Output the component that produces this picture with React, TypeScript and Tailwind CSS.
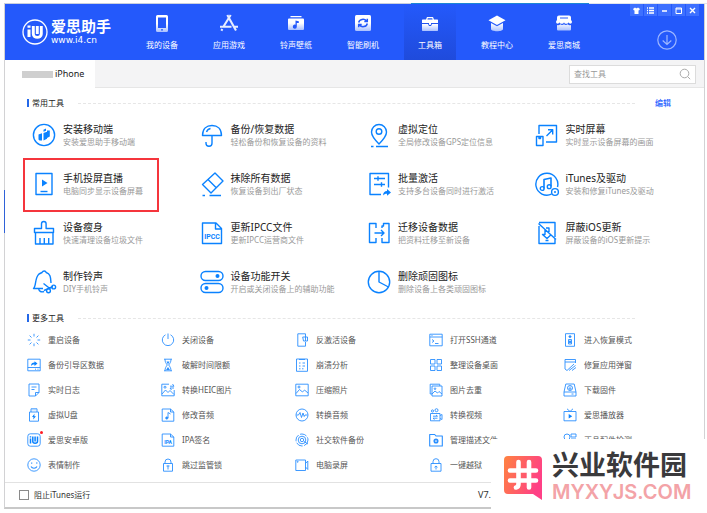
import type { ReactNode } from "react";

type Tool = { title: string; desc: string; icon: ReactNode; highlight?: boolean };
type SmallTool = { title: string; icon: ReactNode; dot?: boolean };

function Big({ children }: { children: ReactNode }) {
  return (
    <svg viewBox="0 0 26 26" className="h-[26px] w-[26px] shrink-0" fill="none" stroke="#0a82ff" strokeWidth="1.4" strokeLinejoin="round" aria-hidden="true">
      {children}
    </svg>
  );
}

function Small({ children }: { children: ReactNode }) {
  return (
    <svg viewBox="0 0 14 14" className="h-3.5 w-3.5 shrink-0" fill="none" stroke="#2a8fff" strokeWidth="0.9" strokeLinejoin="round" aria-hidden="true">
      {children}
    </svg>
  );
}

const navItems: { label: string; icon: ReactNode; active?: boolean }[] = [
  {
    label: "我的设备",
    icon: (
      <path fillRule="evenodd" d="M5.500 1h9A1.500 1.500 0 0 1 16 2.500v14a1.500 1.500 0 0 1-1.500 1.500h-9A1.500 1.500 0 0 1 4 16.500v-14A1.500 1.500 0 0 1 5.500 1zM6 3.500v10.500h8V3.500zM9 15.200v1.300h2v-1.300z" />
    ),
  },
  {
    label: "应用游戏",
    icon: (
      <g fill="none" stroke="#e6edff" strokeWidth="2.100">
        <path d="M8.300 1l8.700 15.500M11.700 1l-7.500 12M1 12.800h11.500M15.200 12.800H19M3.300 15l-.9 1.800" />
      </g>
    ),
  },
  {
    label: "铃声壁纸",
    icon: (
      <path fillRule="evenodd" d="M4.500 2h11v1.300h-11zM3 4.500h14a1 1 0 0 1 1 1V15a1 1 0 0 1-1 1H3a1 1 0 0 1-1-1V5.500a1 1 0 0 1 1-1zM9.500 6.500v4.300a2 2 0 1 0 1.300 1.900V9h2V7.200z" />
    ),
  },
  {
    label: "智能刷机",
    icon: (
      <>
        <rect x="2" y="1" width="16" height="16" rx="1.500" />
        <g fill="none" stroke="#2459fb" strokeWidth="1.500">
          <path d="M5.700 8.500a4.300 3.800 0 0 1 7.800-1.500M14.300 9.500a4.300 3.800 0 0 1-7.800 1.500M14.300 4.800v2.700h-3M5.700 13.200v-2.700h3" />
        </g>
      </>
    ),
  },
  {
    label: "工具箱",
    active: true,
    icon: (
      <>
        <path fillRule="evenodd" d="M7 3h6l1 2.500h3.500l.5.500v3H2V6l.5-.5H6zM7.800 4.200L7.400 5.500h5.200l-.4-1.300zM2 10h6l1 2h2l1-2h6v6.500l-.5.500h-15l-.5-.5z" />
        <path d="M9 9h2v2H9z" />
      </>
    ),
  },
  {
    label: "教程中心",
    icon: <path d="M10 1.500l8.500 4.700L10 11 1.500 6.200zM4 9l6 3.300L16 9v6c0 3-12 3-12 0z" />,
  },
  {
    label: "爱思商城",
    icon: (
      <path fillRule="evenodd" d="M5 1.500h10a2 2 0 0 1 2 2v2.300l1 2c0 2.500-3 2.500-3.500.5-.5 2-4 2-4.500 0-.5 2-4 2-4.500 0C5 10.300 2 10.300 2 7.800l1-2V3.500a2 2 0 0 1 2-2zM6 3.500v1h8v-1zM3 11c1.500.5 2.500 0 3.200-.7 1 1 2.800 1 3.800 0 1 1 2.800 1 3.800 0 .7.700 1.700 1.200 3.200.7v4.500a1 1 0 0 1-1 1H4a1 1 0 0 1-1-1z" />
    ),
  },
];

const tools: Tool[] = [
  {
    title: "安装移动端",
    desc: "安装爱思助手移动端",
    icon: (
      <Big>
        <circle cx="13" cy="13" r="10.600" />
        <path d="M7.500 12.500l3.500-1.200v7.200H8.500l-1-1zM12.500 11l3.500-1.200v7l-3.500 1.700zM16 8.500h2.800v6L16 16zM12.500 7.800L15 6.500v2.300l-2.500 1z" fill="#0a82ff" stroke="none" />
      </Big>
    ),
  },
  {
    title: "备份/恢复数据",
    desc: "轻松备份和恢复设备的资料",
    icon: (
      <Big>
        <path d="M3.500 13.500C3.500 7 7.500 3.500 13 3.500s9.500 3.500 9.500 10zM13 13.500v7.800a3 3 0 0 1-6 0V20M7.500 10c.7-2 2-3.200 4-3.500" />
      </Big>
    ),
  },
  {
    title: "虚拟定位",
    desc: "全局修改设备GPS定位信息",
    icon: (
      <Big>
        <path d="M13 22c-4-4-7.500-7.500-7.500-12a7.500 7.500 0 0 1 15 0c0 4.500-3.500 8-7.500 12z" />
        <circle cx="13" cy="9.500" r="2.800" />
        <path d="M5 24.500h2.500M10 24.500h12" />
      </Big>
    ),
  },
  {
    title: "实时屏幕",
    desc: "实时显示设备屏幕的画面",
    icon: (
      <Big>
        <path d="M5 12V3.500h17.500v16.500H12M2.500 14.500H9v9H2.500zM5 14.500v2h1.500v-2M12.500 14l6-6M14 7.800h4.700v4.700" />
      </Big>
    ),
  },
  {
    title: "手机投屏直播",
    desc: "电脑同步显示设备屏幕",
    highlight: true,
    icon: (
      <Big>
        <rect x="5" y="2.500" width="16" height="21" />
        <path d="M9.500 20.500h7" />
        <path d="M11 8.500v7l5.500-3.500z" fill="#0a82ff" stroke="none" />
      </Big>
    ),
  },
  {
    title: "抹除所有数据",
    desc: "恢复设备到出厂状态",
    icon: (
      <Big>
        <path d="M16 2l8 8-12 12-8.500-8.500zM9 8.500l8.500 8.500M3.500 24.500H6M10.500 24.500H22" />
      </Big>
    ),
  },
  {
    title: "批量激活",
    desc: "支持多台设备同时进行激活",
    icon: (
      <Big>
        <path d="M15 23.500H4v-21h18.500v14M8 7.500h11M12 5.200v4.600M8 13.500h11M15.500 11.200v4.600" />
        <path d="M17 24.500c.2-3 1.500-4.300 4-4.500v-2l4 3.500-4 3.300v-2c-2 0-3 .5-4 1.700z" fill="#0a82ff" stroke="none" />
      </Big>
    ),
  },
  {
    title: "iTunes及驱动",
    desc: "安装和修复iTunes及驱动",
    icon: (
      <Big>
        <path d="M17.500 23.200A11 11 0 1 1 23.500 16" />
        <path d="M10 17.500V8.500l7-1.500v8.500" strokeWidth="1.600" />
        <circle cx="8.200" cy="17.500" r="1.900" />
        <circle cx="15.200" cy="15.700" r="1.900" />
        <circle cx="21" cy="21" r="3.400" />
        <circle cx="21" cy="21" r="1" fill="#0a82ff" stroke="none" />
      </Big>
    ),
  },
  {
    title: "设备瘦身",
    desc: "快速清理设备垃圾文件",
    icon: (
      <Big>
        <path d="M3.500 12.500V8.500h7V3.800a2.300 2.300 0 0 1 4.600 0v4.700h7.400v4zM4.500 12.500V24h17.500V12.500M9 24v-6M13.300 24v-6M17.700 24v-6" />
      </Big>
    ),
  },
  {
    title: "更新IPCC文件",
    desc: "更新IPCC运营商文件",
    icon: (
      <Big>
        <path d="M3.500 3h13.500l5.500 5.500v15h-19zM16.500 3v6h6" />
        <text x="13" y="19" textAnchor="middle" fill="#0a82ff" stroke="none" fontSize="7" fontWeight="700" fontFamily="Roboto, sans-serif">IPCC</text>
      </Big>
    ),
  },
  {
    title: "迁移设备数据",
    desc: "把资料迁移至新设备",
    icon: (
      <Big>
        <path d="M10 8V3.500H3.500v19H10V18M16 8V6h1.500V3.500H23v19h-7V18M8.500 13H18M15 10l3 3-3 3" />
      </Big>
    ),
  },
  {
    title: "屏蔽iOS更新",
    desc: "屏蔽设备的iOS更新提示",
    icon: (
      <Big>
        <path d="M5 6v17.500h16V19M5 2.500h16V17M4.500 3.500L22 19.500M11.500 20.500h3M11 9.500v5H8.500l4.500 4 4-3.700M12 8h3v4" />
      </Big>
    ),
  },
  {
    title: "制作铃声",
    desc: "DIY手机铃声",
    icon: (
      <Big>
        <path d="M12 19.500H2.500C5.500 17 3.500 9 8 5l3-1.500c1-2 3.500-2 4.200 0C20 5 19.500 9 20 14M7.500 19.500c.5 3 3 4 5.500 3M12.500 14.500l7 5.500M13 21.500l9-4" />
        <circle cx="17.500" cy="21.800" r="1.900" />
        <circle cx="22.700" cy="18" r="1.900" />
      </Big>
    ),
  },
  {
    title: "设备功能开关",
    desc: "开启或关闭设备上的辅助功能",
    icon: (
      <Big>
        <rect x="2" y="2.500" width="22" height="9" rx="4.500" />
        <rect x="2" y="14.500" width="22" height="9" rx="4.500" />
        <circle cx="18.500" cy="7" r="2" fill="#0a82ff" stroke="none" />
        <circle cx="7.500" cy="19" r="2" fill="#0a82ff" stroke="none" />
      </Big>
    ),
  },
  {
    title: "删除顽固图标",
    desc: "删除设备上各类顽固图标",
    icon: (
      <Big>
        <circle cx="13" cy="13" r="10.700" />
        <path d="M13 2.500V13l9.500 5" />
      </Big>
    ),
  },
];

const more: SmallTool[] = [
  { title: "重启设备", icon: <Small><path d="M7 .8v2.700M7 10.500v2.700M.8 7h2.700M10.500 7h2.700M2.600 2.600l1.900 1.900M9.500 9.500l1.900 1.900M2.600 11.400l1.900-1.900M9.500 4.500l1.900-1.900" /></Small> },
  { title: "关闭设备", icon: <Small><path d="M4.500 1.800a5.700 5.700 0 1 0 5 0M7 .5V6" /></Small> },
  { title: "反激活设备", icon: <Small><path d="M10.500 4V.8H2.800v12.400h7.700V9M7.700 4h4.800v4H8.500zM10.500 4v4" /></Small> },
  { title: "打开SSH通道", icon: <Small><path d="M.8 1.200h12.400v11.600H.8zM.8 4h12.400M2.500 2.600h1M3 6.500l2 1.500-2 1.500M6 10.500h3.500" /></Small> },
  { title: "进入恢复模式", icon: <Small><path d="M2.500.7h9v12.600h-9zM5.500 6.500h3V11h-3zM7 2.500v2" /><path d="M6 3h2v1.200H6zM6.200 8h1.600v1.700H6.200z" fill="#2a8fff" /></Small> },
  { title: "备份引导区数据", icon: <Small><path d="M.8 1.200h12.400v11.600H.8zM.8 9.500h12.400M8 11.200h1M10.500 11.200h1" /><path d="M4 8c0-2.300 1.300-3.400 3.500-3.400V3.300L10.500 5.600 7.500 8V6.600C6 6.600 5 7 4 8z" fill="#0a82ff" stroke="none" /></Small> },
  { title: "破解时间限额", icon: <Small><path d="M3 1.200h8M3 12.800h8M4 1.200c0 3 1 4 2.300 5.800C5 8.800 4 10 4 12.800M10 1.200c0 3-1 4-2.300 5.800C9 8.800 10 10 10 12.800" /><path d="M5.500 3.500h3L7 6.500zM5 12l2-3 2 3z" fill="#2a8fff" stroke="none" /></Small> },
  { title: "崩溃分析", icon: <Small><path d="M1.500 1h11v12.300h-11zM4 1.500h6M4 5h1.500M7.500 5H10M4 8h1.500M7.500 8H10M4 10.800h1.500M7 10.800h1.500" /></Small> },
  { title: "整理设备桌面", icon: <Small><path d="M1.500 1.500H6V6H1.500zM8 1.500h4.500V6H8zM1.500 8H6v4.500H1.500zM8 8h4.500v4.500H8z" /></Small> },
  { title: "修复应用弹窗", icon: <Small><path d="M4 12.500L2 11V1.500h10.500V5M2 4h10.500M4 12.500l7-6.500M6 12.500l6.500-5M9 12.500l4-3" /></Small> },
  { title: "实时日志", icon: <Small><path d="M2 1h10v8.500L8.500 13H2zM12 9.500H8.500V13M4.500 4h5M4.500 6.500h3" /></Small> },
  { title: "转换HEIC图片", icon: <Small><path d="M8 1.200H.8v11.600h12.400V7M1 11l3.500-4L7 9.500l2-2 4 4M9 3.200h4L11.500 1M13 5H9l1.500 2" /><circle cx="4" cy="4.200" r="1" /></Small> },
  { title: "压缩照片", icon: <Small><path d="M.8 1.200h12.400v11.600H.8zM1 10.500l3.500-4L7.500 9l2-2L13 10" /><circle cx="4" cy="4" r="1" /></Small> },
  { title: "图片去重", icon: <Small><path d="M3 11H1.200V1.200h9.600V3M3 3h10v10H3zM3 11l3-3 2.500 2 1.500-1.500L13 11" /><circle cx="6" cy="5.700" r=".8" /></Small> },
  { title: "下载固件", icon: <Small><path d="M2.800 1h8.400L13 9v4H1V9zM1 9h12M8.500 11h2" /><circle cx="7" cy="5" r="2.500" /><path d="M7 3.500v3M5.800 5.200L7 6.500l1.200-1.300" /></Small> },
  { title: "虚拟U盘", icon: <Small><path d="M4 4V.8h6V4M2.500 4h9v9.200h-9zM5.700 2h.6M7.700 2h.6" /><path d="M7.500 5.800L5 9h1.500l-.3 2.500L9 8.300H7.300z" fill="#0a82ff" stroke="none" /></Small> },
  { title: "修改音频", icon: <Small><path d="M1.200 1h8.300L12.800 4v9.200H1.200zM9.500 1v3h3.300M7 10V4.500l2.500 1.500" /><circle cx="5.800" cy="10" r="1.100" fill="#0a82ff" /></Small> },
  { title: "转换音频", icon: <Small><circle cx="7" cy="7" r="6" /><path d="M1.500 7h2L5 4.500l1.500 5L8 5l1.200 3.500L10 7h2.500" /></Small> },
  { title: "转换视频", icon: <Small><path d="M1.500 5.500h9.500v7.300H1.500zM11 7.500l2-1v5l-2-1M4 8.200h4.500L7 7M8.500 10.200H4L5.500 11.500" /><circle cx="3.500" cy="3" r="1.100" /><circle cx="7.500" cy="2.200" r="1.500" /></Small> },
  { title: "爱思播放器", icon: <Small><path d="M1 3.500h12v9.300H1zM4 .8l3 2.700L10 .8" /><path d="M5.700 6v4.500L9.200 8.200z" fill="#0a82ff" stroke="none" /></Small> },
  { title: "爱思安卓版", dot: true, icon: <Small><rect x=".8" y=".8" width="12.400" height="12.400" rx="2.500" /><path d="M3.500 5.500v5M3.500 3.200v1.200M5.800 3.500v5c0 2.200 4.700 2.200 4.700 0v-5M8.100 3.500v5" strokeWidth="1.500" stroke="#0a82ff" /></Small> },
  { title: "IPA签名", icon: <Small><path d="M1.200 1h8.300L12.800 4v9.200H1.200zM9.500 1v3h3.300" /><text x="7" y="10.500" textAnchor="middle" fill="#0a82ff" stroke="none" fontSize="5" fontWeight="700" fontFamily="Roboto, sans-serif">IPA</text></Small> },
  { title: "社交软件备份", icon: <Small><circle cx="7" cy="7" r="6" strokeDasharray="7 1.500" /><circle cx="7" cy="7" r="3.800" /><circle cx="7" cy="7" r="1.700" /><path d="M9 8.500l4 2.500" /></Small> },
  { title: "管理描述文件", icon: <Small><path d="M.7 1.500h5L7 3h6.300v10H.7z" strokeWidth="1.100" /><circle cx="7" cy="8" r="1.700" strokeWidth="1.700" /></Small> },
  { title: "正品配件检测", icon: <Small><circle cx="4" cy="4" r="3" /><path d="M8 1h5v3H8zM8 6h5v6H8zM4 7v5" /></Small> },
  { title: "表情制作", icon: <Small><circle cx="7" cy="7" r="6.200" /><path d="M4 8.500c1.200 2.300 4.800 2.300 6 0M4.700 4.500v1.300M9 5h1.500" strokeWidth="1.100" /></Small> },
  { title: "跳过监管锁", icon: <Small><path d="M2.500 5.500h9v7.700h-9zM4 5.500V4a3 3 0 0 1 6 0v1.500M7 7.500v4M5.500 8h3" /></Small> },
  { title: "电脑录屏", icon: <Small><path d="M.8 2h9.700v10.500H.8zM10.500 5.500L12.800 3v8.500l-2.300-2.500" /><circle cx="2.700" cy="3.800" r=".5" /></Small> },
  { title: "一键越狱", icon: <Small><path d="M2 5.500h10v7.700H2zM4 5.500V3.700a3 3 0 0 1 6 0v1.800M7 11.500v-3M5.500 9.300L7 8l1.500 1.300" /></Small> },
];

function SectionHeader({ title, action }: { title: string; action?: ReactNode }) {
  return (
    <div className="flex h-3 items-center pr-[33px] pl-[22px]">
      <span className="h-2 w-[2px] bg-[#2468e8]" />
      <h2 className="ml-[3px] w-[46px] text-[8px] leading-3 text-[#222]">{title}</h2>
      <span className="flex-1 border-t border-dashed border-[#e6e6e6]" />
      <span className="flex w-9 justify-end">{action}</span>
    </div>
  );
}

function WindowControls() {
  const controls = [
    { label: "皮肤", icon: <path d="M3 1.500l1 .7h1l1-.7 2 1.500-1 1.500-.5-.3V8h-4V4.200l-.5.300L1 3z" fill="#fff" /> },
    { label: "菜单", icon: <path d="M1 2h1M3 2h5M1 4.500h1M3 4.500h5M1 7h1M3 7h5" stroke="#fff" strokeWidth="1.300" /> },
    { label: "最小化", icon: <path d="M2 5h5" stroke="#fff" strokeWidth="1.500" /> },
    { label: "最大化", icon: <path d="M2 2h5.500v5.500H2zM2 3h5.500" stroke="#fff" fill="none" /> },
    { label: "关闭", icon: <path d="M2 2l5 5M7 2L2 7" stroke="#fff" strokeWidth="1.400" /> },
  ];
  return (
    <div className="flex justify-end gap-px pr-[5px]">
      {controls.map((c) => (
        <button key={c.label} type="button" aria-label={c.label} className="flex h-3 w-[13px] items-center justify-center bg-[#3d70ff]">
          <svg viewBox="0 0 9 9" className="h-[9px] w-[9px]" aria-hidden="true">{c.icon}</svg>
        </button>
      ))}
    </div>
  );
}

function Header() {
  return (
    <header className="flex h-14 bg-[#2459fb] text-white">
      <svg width="0" height="0" className="absolute" aria-hidden="true">
        <linearGradient id="fade" x1="0" y1="0" x2="0" y2="1">
          <stop offset="0.5" stopColor="#fff" />
          <stop offset="1" stopColor="#a9c0ff" />
        </linearGradient>
      </svg>
      <div className="flex w-[131px] shrink-0 items-center pl-[17px]">
        <svg viewBox="0 0 26 26" className="h-[26px] w-[26px]" fill="none" stroke="#fff" aria-hidden="true">
          <circle cx="13" cy="13" r="12" strokeWidth="1.300" />
          <path d="M7 10.500V18M7 6.500v2.300" strokeWidth="3" />
          <path d="M11.300 7v8c0 4.500 8 4.500 8 0V7M15.300 7v8" strokeWidth="2.900" />
        </svg>
        <div className="ml-[3px] font-['Liberation_Sans','Noto_Sans_CJK_SC',sans-serif]">
          <div className="text-[15px] leading-[17px] font-bold">爱思助手</div>
          <div className="font-['DejaVu_Sans',sans-serif] text-[9px] leading-[11px]">www.i4.cn</div>
        </div>
      </div>
      <nav className="flex flex-1 gap-[15px]">
        {navItems.map((item) => (
          <button
            key={item.label}
            type="button"
            className={`flex w-[52px] shrink-0 flex-col items-center pt-2.5 ${item.active ? "bg-linear-to-b from-[#2459fb] to-[#1f4bdc]" : ""}`}
          >
            <svg viewBox="0 0 20 20" className="h-5 w-5" fill="url(#fade)" aria-hidden="true">{item.icon}</svg>
            <span className="mt-[5px] text-[8px] leading-3">{item.label}</span>
          </button>
        ))}
      </nav>
      <div className="flex w-[75px] shrink-0 flex-col">
        <WindowControls />
        <button type="button" aria-label="下载" className="mt-3.5 ml-7 h-5 w-5">
          <svg viewBox="0 0 20 20" className="h-5 w-5" fill="none" stroke="#9db6ff" strokeWidth="1.200" aria-hidden="true">
            <circle cx="10" cy="10" r="9.200" />
            <path d="M10 5v9.500M5.700 10.500l4.300 4 4.300-4" />
          </svg>
        </button>
      </div>
    </header>
  );
}

function Watermark() {
  return (
    <div className="absolute right-0 bottom-0 flex h-[75px] w-[216px] bg-white pt-[17px] pl-[13px]">
      <svg viewBox="0 0 38 44" className="h-11 w-[38px]" aria-hidden="true">
        <linearGradient id="brand" x1="0" y1="0" x2="1" y2="0.4">
          <stop offset="0" stopColor="#ff8340" />
          <stop offset="1" stopColor="#ff4086" />
        </linearGradient>
        <path d="M4 0h30a4 4 0 0 1 4 4v40l-9-6H4a4 4 0 0 1-4-4V4a4 4 0 0 1 4-4z" fill="url(#brand)" />
        <path d="M14.500 6v22c0 3-2.500 3.500-2.500 3.500M25 6v25.500M6 14.500h26M6 24.500h26" stroke="#fff" strokeWidth="4.600" strokeLinecap="round" fill="none" />
      </svg>
      <div className="-mt-1 ml-2.5 font-['Liberation_Sans','Noto_Sans_CJK_SC',sans-serif]">
        <div className="text-[27px] leading-7 font-bold whitespace-nowrap text-[#3a3a3c]">兴业软件园</div>
        <div className="font-[Inter,sans-serif] text-[20px] leading-6 font-semibold whitespace-nowrap text-[#f3a3a7]">MYXYJS.COM</div>
      </div>
    </div>
  );
}

export default function App() {
  return (
    <div className="relative w-full bg-white pt-[3px] pb-[5px] pl-1 font-['Noto_Sans','Noto_Sans_CJK_SC',sans-serif]">
      <div className="flex h-px">
        <span className="w-[407px] bg-[#c9cfdd]" />
        <span className="w-[178px] bg-[#1b86d6]" />
        <span className="flex-1 bg-[#dfe3ee]" />
      </div>
      <div className="mr-0.5 border-x border-b-2 border-[#d2d2d4] border-b-[#c8c8c8] bg-white">
        <Header />
        <div className="flex h-7 items-center bg-[#f4f4f5] shadow-[inset_0_-1px_0_#e6e6e6]">
          <button type="button" className="flex h-full w-[90px] items-center bg-white pl-[17px] text-[9px] text-[#222]">
            <span className="mr-0.5 h-[7px] w-[31px] bg-[#cfcfcf]" />
            iPhone
          </button>
          <label className="mr-2 ml-auto flex h-[19px] w-[127px] items-center border border-[#dcdcdc] bg-white px-1">
            <input type="text" aria-label="查找工具" placeholder="查找工具" className="w-full min-w-0 text-[8px] outline-none placeholder:text-[#999]" />
            <svg viewBox="0 0 12 12" className="h-3 w-3 shrink-0" fill="none" stroke="#aaa" aria-hidden="true">
              <circle cx="5.500" cy="5.500" r="4.300" />
              <path d="M8.700 8.700l2.500 2.500" />
            </svg>
          </label>
        </div>
        <main className="pt-[9px] pb-[5px]">
          <SectionHeader title="常用工具" action={<a href="#edit" className="text-[8px] leading-3 font-medium text-[#1c5cff]">编辑</a>} />
          <section className="mt-px grid grid-cols-4 pr-[7px] pl-[22px]">
            {tools.map((t) => (
              <div key={t.title} className="relative h-[49px]">
                <button type="button" className="flex h-full w-full items-center text-left">
                  <span className="flex w-[34px] shrink-0 justify-center">{t.icon}</span>
                  <span className="ml-0.5 block whitespace-nowrap">
                    <span className="block text-[10px] leading-3.5 text-[#222]">{t.title}</span>
                    <span className="block text-[8px] leading-3 text-[#999]">{t.desc}</span>
                  </span>
                </button>
                {t.highlight && <span className="pointer-events-none absolute -top-px -left-1 h-[54px] w-[136px] border-2 border-[#f5353c]" />}
              </div>
            ))}
          </section>
          <div className="mt-1.5">
            <SectionHeader title="更多工具" />
          </div>
          <section className="mt-[3px] grid grid-cols-5 pr-[7px] pl-[22px]">
            {more.map((t) => (
              <button key={t.title} type="button" className="flex h-[25px] items-center text-left whitespace-nowrap">
                <span className="relative">
                  {t.icon}
                  {t.dot && <span className="absolute -top-0.5 -right-0.5 h-[3px] w-[3px] rounded-full bg-[#ff1c24]" />}
                </span>
                <span className="ml-[7px] text-[8px] leading-3 text-[#555]">{t.title}</span>
              </button>
            ))}
          </section>
        </main>
        <footer className="flex h-[25px] items-center border-t border-[#e2e2e2] pl-3.5 text-[8px] text-[#333]">
          <label className="flex items-center gap-[5px]">
            <input type="checkbox" className="h-2.5 w-2.5 appearance-none border border-[#8a8a8a] bg-white" />
            阻止iTunes运行
          </label>
          <span className="ml-auto w-[226px] text-[9px]">V7.98</span>
        </footer>
      </div>
      <span className="absolute top-[190px] left-1 h-[43px] w-px bg-[#2f62d8]" />
      <Watermark />
    </div>
  );
}
